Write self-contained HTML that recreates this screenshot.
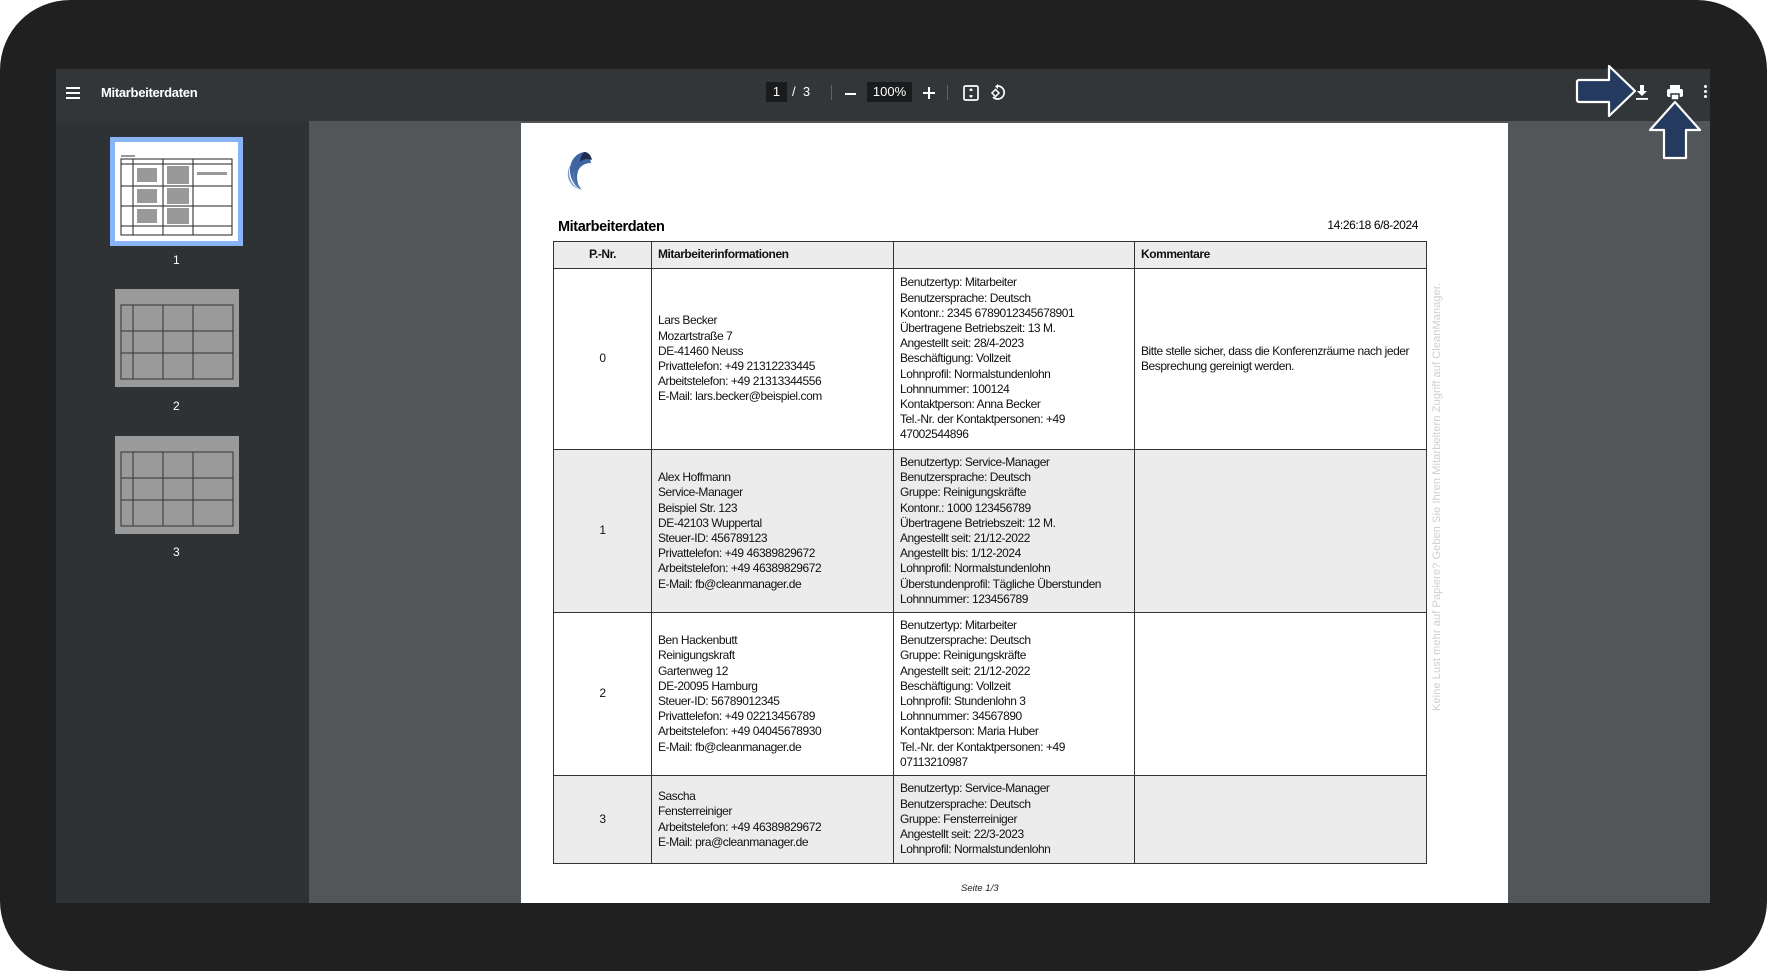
<!DOCTYPE html>
<html><head><meta charset="utf-8"><style>
*{margin:0;padding:0;box-sizing:border-box}
body{width:1767px;height:971px;background:#fff;position:relative;overflow:hidden;font-family:"Liberation Sans",sans-serif}
.frame{position:absolute;left:0;top:0;width:1767px;height:971px;background:#212021;border-radius:70px}
.viewer{position:absolute;left:56px;top:69px;width:1654px;height:834px;background:#525659;overflow:hidden}
.tb{position:absolute;left:0;top:0;width:1654px;height:52px;background:#323639;color:#fff;font-size:13px}
.side{position:absolute;left:0;top:52px;width:253px;height:782px;background:#2f3235}
.page{position:absolute;left:465px;top:54px;width:987px;height:790px;background:#fff}
.abs{position:absolute}
table{position:absolute;left:32px;top:118px;border-collapse:collapse;table-layout:fixed;width:873px;font-family:"Liberation Sans",sans-serif;font-size:12px;letter-spacing:-0.45px;line-height:15.2px;color:#111}
td{border:1.5px solid #333;vertical-align:middle;padding:0 6px;white-space:nowrap;overflow:hidden}
th{border:1.5px solid #333;background:#ececec;text-align:left;padding:0 6px;height:27px;font-weight:bold}
.g td{background:#ececec}
.c{text-align:center}
.thumb{position:absolute;background:#fff}
.tl{position:absolute;color:#fff;font-size:12px}
</style></head><body>
<div class="frame"></div>
<div class="viewer">
 <div class="tb">
  <div class="abs" style="left:10px;top:18px;width:14px;height:2px;background:#fff;box-shadow:0 5px 0 #fff,0 10px 0 #fff"></div>
  <div class="abs" style="left:45px;top:16px;font-size:13px;font-weight:bold;letter-spacing:-0.3px">Mitarbeiterdaten</div>
  <div class="abs" style="left:710px;top:13px;width:21px;height:20px;background:#191b1c;text-align:center;line-height:20px">1</div>
  <div class="abs" style="left:736px;top:13px;line-height:20px">/&nbsp;&nbsp;3</div>
  <div class="abs" style="left:775px;top:16px;width:1px;height:15px;background:#5f6368"></div>
  <div class="abs" style="left:789px;top:24px;width:11px;height:1.6px;background:#fff"></div>
  <div class="abs" style="left:811px;top:13px;width:45px;height:20px;background:#191b1c;text-align:center;line-height:20px">100%</div>
  <div class="abs" style="left:867px;top:23px;width:12px;height:1.6px;background:#fff"></div>
  <div class="abs" style="left:872px;top:18px;width:1.6px;height:12px;background:#fff"></div>
  <div class="abs" style="left:891px;top:16px;width:1px;height:15px;background:#5f6368"></div>
  <svg class="abs" style="left:906px;top:15px" width="18" height="18" viewBox="0 0 18 18"><rect x="2" y="2" width="14" height="14" rx="1.5" fill="none" stroke="#fff" stroke-width="1.7"/><path d="M9 5v2M7.5 6.5 9 5l1.5 1.5M9 13v-2M7.5 11.5 9 13l1.5-1.5" stroke="#fff" stroke-width="1.3" fill="none"/></svg>
  <svg class="abs" style="left:933px;top:14px" width="18" height="19" viewBox="0 0 18 19"><path d="M9 3a6.5 6.5 0 1 1-5 11" fill="none" stroke="#fff" stroke-width="1.7"/><path d="M9 1v5l-3-2.5z" fill="#fff"/><rect x="4" y="7.5" width="5" height="5" transform="rotate(45 6.5 10)" fill="none" stroke="#fff" stroke-width="1.5"/></svg>
  <svg class="abs" style="left:1578px;top:15px" width="16" height="18" viewBox="0 0 16 18"><path d="M6 1h4v6h3l-5 5-5-5h3z" fill="#fff"/><rect x="2" y="14" width="12" height="1.8" fill="#fff"/></svg>
  <svg class="abs" style="left:1610px;top:15px" width="18" height="17" viewBox="0 0 18 17"><rect x="4" y="1" width="10" height="4" fill="#fff"/><rect x="1" y="5" width="16" height="8" rx="2" fill="#fff"/><rect x="5" y="10" width="8" height="6" fill="#fff" stroke="#323639" stroke-width="1.5"/></svg>
  <div class="abs" style="left:1648px;top:16px;width:3px;height:3px;background:#fff;border-radius:50%;box-shadow:0 5px 0 #fff,0 10px 0 #fff"></div>
 </div>
 <div class="side">
  <div class="abs" style="left:54px;top:16px;width:133px;height:109px;background:#8ab4f8"></div>
  <div class="thumb" style="left:59px;top:21px;width:123px;height:99px">
   <svg width="123" height="99"><g stroke="#222" fill="none" stroke-width="1"><rect x="6" y="17" width="111" height="76"/><line x1="6" y1="22" x2="117" y2="22"/><line x1="6" y1="44" x2="117" y2="44"/><line x1="6" y1="64" x2="117" y2="64"/><line x1="6" y1="84" x2="117" y2="84"/><line x1="18" y1="17" x2="18" y2="93"/><line x1="48" y1="17" x2="48" y2="93"/><line x1="78" y1="17" x2="78" y2="93"/></g><g fill="#999"><rect x="6" y="13" width="14" height="2"/><rect x="22" y="26" width="20" height="14"/><rect x="52" y="24" width="22" height="18"/><rect x="22" y="47" width="20" height="14"/><rect x="52" y="46" width="22" height="16"/><rect x="22" y="67" width="20" height="14"/><rect x="52" y="66" width="22" height="16"/><rect x="82" y="30" width="30" height="3"/></g></svg>
  </div>
  <div class="tl" style="left:117px;top:132px">1</div>
  <div class="thumb" style="left:59px;top:168px;width:124px;height:98px;background:#9a9a9a">
   <svg width="124" height="98"><g stroke="#333" fill="none"><rect x="6" y="16" width="112" height="74"/><line x1="6" y1="42" x2="118" y2="42"/><line x1="6" y1="64" x2="118" y2="64"/><line x1="18" y1="16" x2="18" y2="90"/><line x1="48" y1="16" x2="48" y2="90"/><line x1="78" y1="16" x2="78" y2="90"/></g></svg>
  </div>
  <div class="tl" style="left:117px;top:278px">2</div>
  <div class="thumb" style="left:59px;top:315px;width:124px;height:98px;background:#9a9a9a">
   <svg width="124" height="98"><g stroke="#333" fill="none"><rect x="6" y="16" width="112" height="74"/><line x1="6" y1="42" x2="118" y2="42"/><line x1="6" y1="64" x2="118" y2="64"/><line x1="18" y1="16" x2="18" y2="90"/><line x1="48" y1="16" x2="48" y2="90"/><line x1="78" y1="16" x2="78" y2="90"/></g></svg>
  </div>
  <div class="tl" style="left:117px;top:424px">3</div>
 </div>
 <div class="page">
  <svg class="abs" style="left:38px;top:26px" width="38" height="44" viewBox="0 0 38 44"><path d="M27 3c-9 0-16 8-16 18 0 9 5 17 12 20-5-5-6-12-4-19 2-5 7-8 13-8-1-5-2-9-5-11z" fill="#3f66a3"/><path d="M13 14c-5 7-4 21 8 26-12-2-16-17-8-26z" fill="#7d9ccd"/><path d="M16 20c-2 7 0 15 6 19-8-3-10-12-6-19z" fill="#5a7fb9"/><path d="M25 3c4 0 7 3 8 8-5-2-9-1-12 2 0-4 2-8 4-10z" fill="#1e2f4d"/></svg>
  <div class="abs" style="left:37px;top:96px;font-size:14.5px;font-weight:bold;letter-spacing:-0.4px">Mitarbeiterdaten</div>
  <div class="abs" style="right:90px;top:95px;font-size:12px;letter-spacing:-0.4px">14:26:18 6/8-2024</div>
  <table>
   <colgroup><col style="width:98px"><col style="width:242px"><col style="width:241px"><col style="width:292px"></colgroup>
   <tr><th class="c" style="text-align:center">P.-Nr.</th><th>Mitarbeiterinformationen</th><th></th><th>Kommentare</th></tr>
   <tr style="height:181px"><td class="c">0</td><td>Lars Becker<br>Mozartstraße 7<br>DE-41460 Neuss<br>Privattelefon: +49 21312233445<br>Arbeitstelefon: +49 21313344556<br>E-Mail: lars.becker@beispiel.com</td><td>Benutzertyp: Mitarbeiter<br>Benutzersprache: Deutsch<br>Kontonr.: 2345 6789012345678901<br>Übertragene Betriebszeit: 13 M.<br>Angestellt seit: 28/4-2023<br>Beschäftigung: Vollzeit<br>Lohnprofil: Normalstundenlohn<br>Lohnnummer: 100124<br>Kontaktperson: Anna Becker<br>Tel.-Nr. der Kontaktpersonen: +49<br>47002544896</td><td>Bitte stelle sicher, dass die Konferenzräume nach jeder<br>Besprechung gereinigt werden.</td></tr>
   <tr class="g" style="height:163px"><td class="c">1</td><td>Alex Hoffmann<br>Service-Manager<br>Beispiel Str. 123<br>DE-42103 Wuppertal<br>Steuer-ID: 456789123<br>Privattelefon: +49 46389829672<br>Arbeitstelefon: +49 46389829672<br>E-Mail: fb@cleanmanager.de</td><td>Benutzertyp: Service-Manager<br>Benutzersprache: Deutsch<br>Gruppe: Reinigungskräfte<br>Kontonr.: 1000 123456789<br>Übertragene Betriebszeit: 12 M.<br>Angestellt seit: 21/12-2022<br>Angestellt bis: 1/12-2024<br>Lohnprofil: Normalstundenlohn<br>Überstundenprofil: Tägliche Überstunden<br>Lohnnummer: 123456789</td><td></td></tr>
   <tr style="height:163px"><td class="c">2</td><td>Ben Hackenbutt<br>Reinigungskraft<br>Gartenweg 12<br>DE-20095 Hamburg<br>Steuer-ID: 56789012345<br>Privattelefon: +49 02213456789<br>Arbeitstelefon: +49 04045678930<br>E-Mail: fb@cleanmanager.de</td><td>Benutzertyp: Mitarbeiter<br>Benutzersprache: Deutsch<br>Gruppe: Reinigungskräfte<br>Angestellt seit: 21/12-2022<br>Beschäftigung: Vollzeit<br>Lohnprofil: Stundenlohn 3<br>Lohnnummer: 34567890<br>Kontaktperson: Maria Huber<br>Tel.-Nr. der Kontaktpersonen: +49<br>07113210987</td><td></td></tr>
   <tr class="g" style="height:88px"><td class="c">3</td><td>Sascha<br>Fensterreiniger<br>Arbeitstelefon: +49 46389829672<br>E-Mail: pra@cleanmanager.de</td><td>Benutzertyp: Service-Manager<br>Benutzersprache: Deutsch<br>Gruppe: Fensterreiniger<br>Angestellt seit: 22/3-2023<br>Lohnprofil: Normalstundenlohn</td><td></td></tr>
  </table>
  <div class="abs" style="left:910px;top:588px;transform:rotate(-90deg);transform-origin:0 0;font-size:11px;color:#cfcfcf;white-space:nowrap;letter-spacing:0.1px">Keine Lust mehr auf Papiere? Geben Sie Ihren Mitarbeitern Zugriff auf CleanManager.</div>
  <div class="abs" style="left:440px;top:760px;font-size:9.5px;font-style:italic;color:#222">Seite 1/3</div>
 </div>
</div>
<svg class="abs" style="left:1574px;top:62px" width="66" height="58" viewBox="0 0 66 58"><path d="M5 18h30V4l26 25-26 25V40H5a2 2 0 0 1-2-2V20a2 2 0 0 1 2-2z" fill="#243a5e" stroke="#fff" stroke-width="2.2" stroke-linejoin="round"/></svg>
<svg class="abs" style="left:1646px;top:97px" width="58" height="64" viewBox="0 0 58 64"><path d="M18 61V33H4L29 5l25 28H40v28z" fill="#243a5e" stroke="#fff" stroke-width="2.2" stroke-linejoin="round"/></svg>
</body></html>
